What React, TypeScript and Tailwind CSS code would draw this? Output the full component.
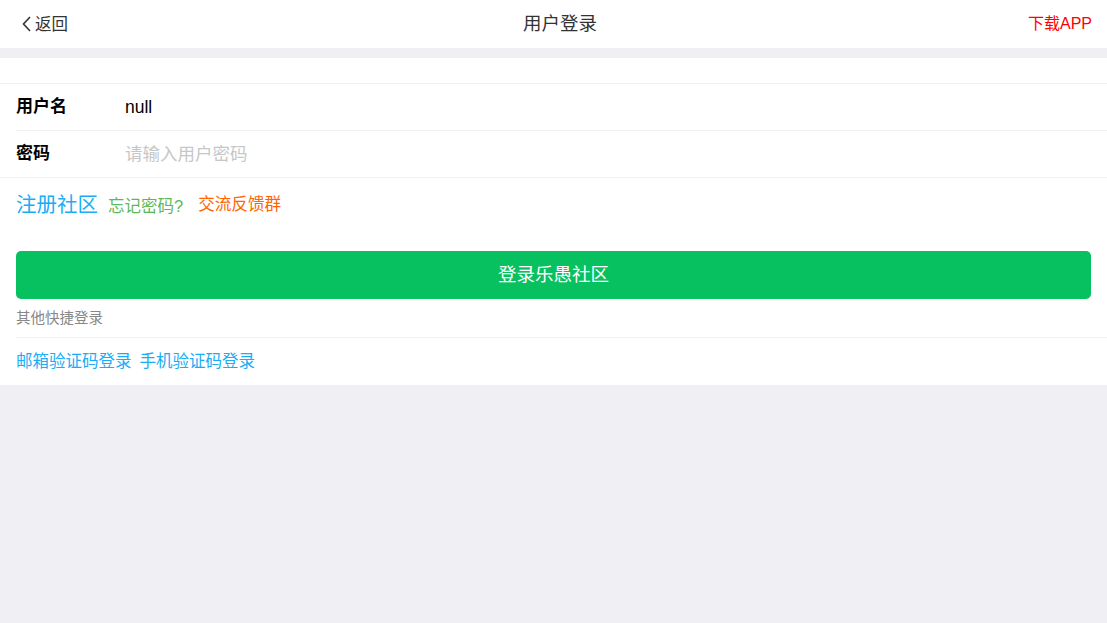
import React from "react";

const font = { fontFamily: '"Liberation Sans", "Noto Sans CJK SC", sans-serif' };

const App = () => {
  const [username, setUsername] = React.useState("null");
  const [password, setPassword] = React.useState("");

  return (
    <div
      className="min-h-screen bg-[#efeff4] text-[#333]"
      style={font}
    >
      {/* header */}
      <div className="h-12 bg-white flex items-center justify-between px-[15px]">
        <div className="flex items-center w-24 text-base text-[#333]">
          <svg width="14" height="18" viewBox="0 0 14 18" className="ml-[5px] mr-[1px]">
            <path d="M10 2 L3.5 9 L10 16" fill="none" stroke="#333" strokeWidth="1.6" />
          </svg>
          <span className="text-[16.5px]">返回</span>
        </div>
        <div className="ml-[13px] text-[18.5px] text-[#333]">用户登录</div>
        <div className="w-24 text-right text-[16px] text-[#ff0000]">下载APP</div>
      </div>

      <div className="h-[10px]" />

      {/* form */}
      <div className="bg-white">
        <div className="h-[26px] border-b border-[#f2f2f2]" />
        <div className="pl-4">
          <div className="h-[47px] flex items-center border-b border-[#f2f2f2]">
            <label className="w-[109px] text-[17px] font-bold text-black">用户名</label>
            <input
              value={username}
              onChange={(e) => setUsername(e.target.value)}
              className="flex-1 text-[17.5px] text-black outline-none bg-transparent"
            />
          </div>
        </div>
        <div className="h-[47px] flex items-center border-b border-[#f2f2f2] pl-4">
          <label className="w-[109px] text-[17px] font-bold text-black">密码</label>
          <input
            type="password"
            value={password}
            onChange={(e) => setPassword(e.target.value)}
            placeholder="请输入用户密码"
            className="flex-1 text-[17.5px] text-black outline-none bg-transparent placeholder:text-[#c7c7c7]"
          />
        </div>

        <div className="px-4 pt-[12px] flex items-center">
          <a className="text-[20.5px] text-[#1aadf5]">注册社区</a>
          <a className="ml-[10px] mt-[1px] text-[16.5px] text-[#5cb85c]">忘记密码?</a>
          <a className="ml-[15px] mt-[1px] text-[16.6px] text-[#ff6600]">交流反馈群</a>
        </div>

        <div className="px-4 pt-[30px]">
          <button className="w-full h-12 rounded-[5px] bg-[#07c160] text-white text-[18.5px]">
            登录乐愚社区
          </button>
        </div>

        <div className="pl-4">
          <div className="h-[39px] pt-[3px] flex items-center text-[14.5px] text-[#888] border-b border-[#f2f2f2]">
            其他快捷登录
          </div>
          <div className="h-[47px] flex items-center text-[16.5px] text-[#1aadf5]">
            <a>邮箱验证码登录</a>
            <a className="ml-2">手机验证码登录</a>
          </div>
        </div>
      </div>
    </div>
  );
};

export default App;
